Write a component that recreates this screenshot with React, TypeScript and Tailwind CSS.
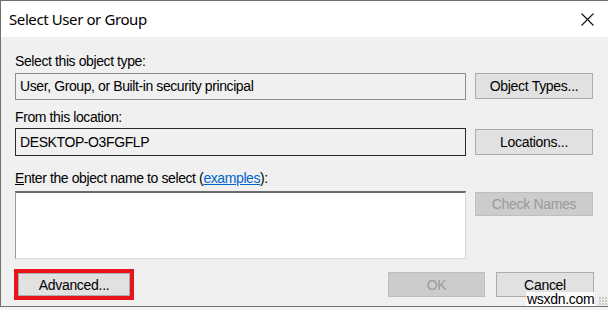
import React from "react";

const font = { fontFamily: '"Liberation Sans", Arial, sans-serif' };

function Btn({ children, disabled, className = "" }: { children: React.ReactNode; disabled?: boolean; className?: string }) {
  return (
    <div
      className={
        "flex items-center justify-center border text-[14px] leading-none tracking-[-0.3px] " +
        (disabled
          ? "bg-[#cccccc] border-[#bfbfbf] text-[#9a9a9a] "
          : "bg-[#e1e1e1] border-[#adadad] text-[#000000] ") +
        className
      }
    >
      {children}
    </div>
  );
}

export default function App() {
  return (
    <div className="relative w-[608px] h-[310px] bg-[#f4f4f4] overflow-hidden" style={font}>
      <div className="flex flex-col w-[608px] h-[307px] border-t border-l border-b border-[#6f6f6f] bg-[#f0f0f0]">
        {/* title bar */}
        <div className="flex items-center justify-between h-[36px] bg-white pl-[8px] pr-[14px] shrink-0">
          <span className="text-[15px] text-black tracking-[-0.4px]" style={{ fontFamily: '"Noto Sans", "Open Sans", sans-serif' }}>
            Select User or Group
          </span>
          <svg width="13" height="13" viewBox="0 0 13 13" className="mt-[1px]">
            <path d="M0.5 0.5 L12.5 12.5 M12.5 0.5 L0.5 12.5" stroke="#111" strokeWidth="1.1" fill="none" />
          </svg>
        </div>
        {/* body */}
        <div className="flex flex-col flex-1 pl-[14px] pr-[14px] pt-[16px] text-[14px] text-black tracking-[-0.4px]">
          <div className="h-[16px] leading-[16px]">Select this object type:</div>
          <div className="flex gap-[9px] mt-[4px] h-[27px]">
            <div className="w-[451px] h-[27px] border border-[#8c8c8c] bg-[#f0f0f0] flex items-center pl-[4px]">
              User, Group, or Built-in security principal
            </div>
            <Btn className="w-[118px] h-[26px]">Object Types...</Btn>
          </div>
          <div className="h-[16px] leading-[16px] mt-[9px]">From this location:</div>
          <div className="flex gap-[9px] mt-[3px] h-[28px]">
            <div className="w-[451px] h-[28px] border border-[#2a2a2a] bg-[#f0f0f0] flex items-center pl-[4px]">
              DESKTOP-O3FGFLP
            </div>
            <Btn className="w-[118px] h-[26px] mt-[1px]">Locations...</Btn>
          </div>
          <div className="h-[16px] leading-[16px] mt-[14px]">
            <span className="underline">E</span>nter the object name to select (
            <span className="text-[#0066cc] underline">examples</span>):
          </div>
          <div className="flex gap-[9px] mt-[5px] h-[68px]">
            <div className="w-[451px] h-[68px] bg-white border-t-2 border-t-[#6a6a6a] border-l border-l-[#9a9a9a] border-r border-r-[#d8d8d8] border-b border-b-[#d8d8d8]" />
            <Btn disabled className="w-[118px] h-[24px] mt-[1px]">Check Names</Btn>
          </div>
          <div className="flex items-center mt-[10px] h-[31px]">
            <div className="ml-[-1px] w-[120px] h-[31px] border-[4px] border-[#e8141c] flex">
              <Btn className="flex-1 border-[#adadad]">Advanced...</Btn>
            </div>
            <div className="flex-1" />
            <Btn disabled className="w-[97px] h-[25px]">OK</Btn>
            <Btn className="w-[98px] h-[25px] ml-[11px]">Cancel</Btn>
          </div>
        </div>
      </div>
      {/* watermark */}
      <div className="absolute left-[526px] top-[292px] bg-white/90 px-[1px] text-[14px] leading-[14px] text-black tracking-[-0.3px]">wsxdn.com</div>
      <div className="absolute left-[599px] top-[297px] grid grid-cols-3 gap-[1px]">
        <div className="w-[2px] h-[2px] bg-[#c8c8c8]" />
        <div className="w-[2px] h-[2px] bg-[#c8c8c8]" />
        <div className="w-[2px] h-[2px] bg-[#c8c8c8]" />
        <div className="w-[2px] h-[2px] bg-[#c8c8c8]" />
        <div className="w-[2px] h-[2px] bg-[#c8c8c8]" />
        <div className="w-[2px] h-[2px] bg-[#c8c8c8]" />
        <div className="w-[2px] h-[2px] bg-[#c8c8c8]" />
        <div className="w-[2px] h-[2px] bg-[#c8c8c8]" />
        <div className="w-[2px] h-[2px] bg-[#c8c8c8]" />
      </div>
    </div>
  );
}
